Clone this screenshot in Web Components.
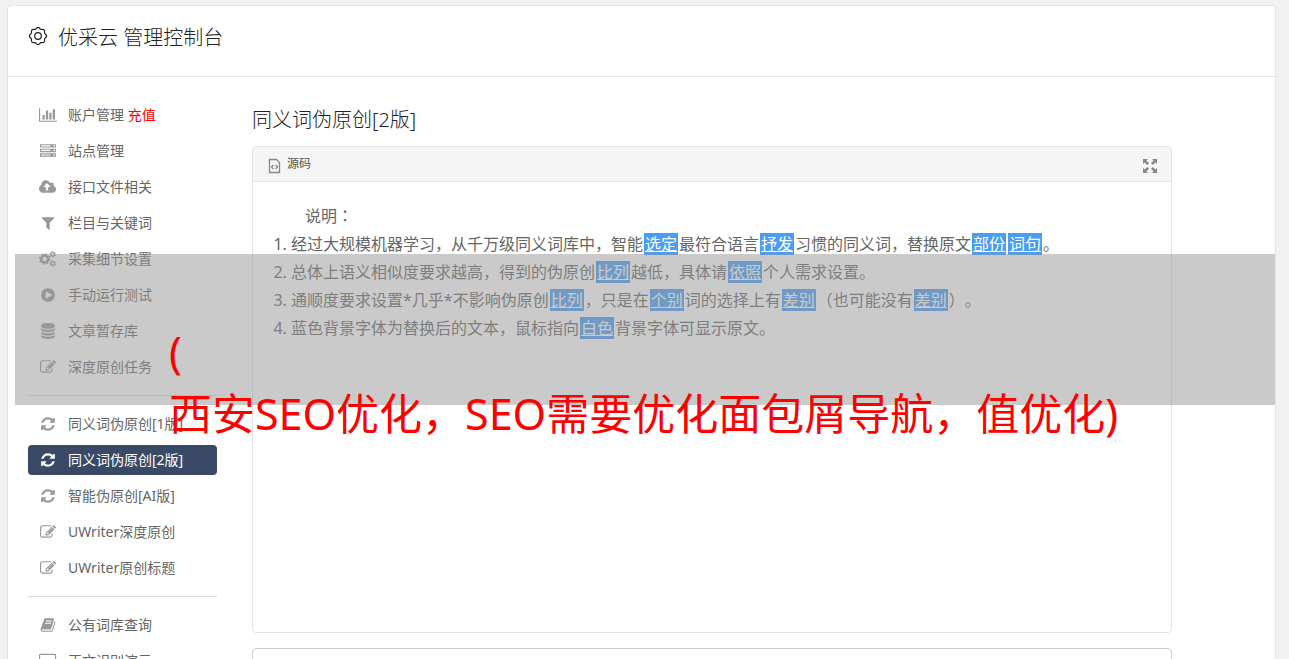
<!DOCTYPE html>
<html lang="zh-CN">
<head>
<meta charset="utf-8">
<title>优采云 管理控制台</title>
<style>
html{background:#f2f2f2}
body{margin:0;color:#666;font:14px/20px "Noto Sans","Noto Sans CJK SC",sans-serif;text-spacing-trim:space-all}
</style>
</head>
<body>
<console-page>
  <console-header slot="header">优采云 管理控制台</console-header>
  <side-nav slot="nav">
    <nav-item icon="chart">账户管理 <span style="color:#f00">充值</span></nav-item>
    <nav-item icon="server">站点管理</nav-item>
    <nav-item icon="cloud">接口文件相关</nav-item>
    <nav-item icon="filter">栏目与关键词</nav-item>
    <nav-item icon="cogs">采集细节设置</nav-item>
    <nav-item icon="play">手动运行测试</nav-item>
    <nav-item icon="database">文章暂存库</nav-item>
    <nav-item icon="edit">深度原创任务</nav-item>
    <nav-line></nav-line>
    <nav-item icon="refresh">同义词伪原创[1版]</nav-item>
    <nav-item icon="refresh" active>同义词伪原创[2版]</nav-item>
    <nav-item icon="refresh">智能伪原创[AI版]</nav-item>
    <nav-item icon="edit">UWriter深度原创</nav-item>
    <nav-item icon="edit">UWriter原创标题</nav-item>
    <nav-line></nav-line>
    <nav-item icon="book">公有词库查询</nav-item>
    <nav-item icon="desktop">正文识别演示</nav-item>
  </side-nav>
  <rewrite-editor></rewrite-editor>
  <page-caption slot="caption"></page-caption>
</console-page>

<script>
const ICONS = {
  chart: ['2048', '<path d="M640 896v512h-256v-512h256zm384-512v1024h-256v-1024h256zm1024 1152v128h-2048v-1536h128v1408h1920zm-640-896v768h-256v-768h256zm384-384v1152h-256v-1152h256z"/>'],
  server: ['1792', '<path d="M128 1408h1024v-128h-1024v128zm0-512h1024v-128h-1024v128zm1568 448q0-40-28-68t-68-28-68 28-28 68 28 68 68 28 68-28 28-68zm-1568-960h1024v-128h-1024v128zm1568 448q0-40-28-68t-68-28-68 28-28 68 28 68 68 28 68-28 28-68zm0-512q0-40-28-68t-68-28-68 28-28 68 28 68 68 28 68-28 28-68zm96 832v384h-1792v-384h1792zm0-512v384h-1792v-384h1792zm0-512v384h-1792v-384h1792z"/>'],
  cloud: ['1920', '<path d="M1280 864q0-14-9-23l-352-352q-9-9-23-9t-23 9l-351 351q-10 12-10 24 0 14 9 23t23 9h224v352q0 13 9.5 22.5t22.5 9.5h192q13 0 22.5-9.5t9.5-22.5v-352h224q13 0 22.5-9.5t9.5-22.5zm640 288q0 159-112.5 271.5t-271.5 112.5h-1088q-185 0-316.5-131.5t-131.5-316.5q0-130 70-240t188-165q-2-30-2-43 0-212 150-362t362-150q156 0 285.5 87t188.5 231q71-62 166-62 106 0 181 75t75 181q0 76-41 138 130 31 213.5 135.5t83.5 238.5z"/>'],
  filter: ['1792', '<path d="M1595 295q17 41-14 70l-493 493v742q0 42-39 59-13 5-25 5-27 0-45-19l-256-256q-19-19-19-45v-486l-493-493q-31-29-14-70 17-39 59-39h1280q42 0 59 39z"/>'],
  cogs: ['1920', '<g fill="none" stroke="currentColor"><circle cx="640" cy="896" r="384" stroke-width="260"/><circle cx="640" cy="896" r="560" stroke-width="170" stroke-dasharray="220 220"/><circle cx="1536" cy="384" r="200" stroke-width="140"/><circle cx="1536" cy="384" r="310" stroke-width="120" stroke-dasharray="162 162"/><circle cx="1536" cy="1408" r="200" stroke-width="140"/><circle cx="1536" cy="1408" r="310" stroke-width="120" stroke-dasharray="162 162"/></g>'],
  play: ['1792', '<path d="M896 128q209 0 385.5 103t279.5 279.5 103 385.5-103 385.5-279.5 279.5-385.5 103-385.5-103-279.5-279.5-103-385.5 103-385.5 279.5-279.5 385.5-103zm384 823q32-18 32-55t-32-55l-544-320q-31-19-64-1-32 19-32 56v640q0 37 32 56 16 8 32 8 17 0 32-9z"/>'],
  database: ['1792', '<path d="M896 768q237 0 443-43t325-127v170q0 69-103 128t-280 93.5-385 34.5-385-34.5-280-93.5-103-128v-170q119 84 325 127t443 43zm0 768q237 0 443-43t325-127v170q0 69-103 128t-280 93.5-385 34.5-385-34.5-280-93.5-103-128v-170q119 84 325 127t443 43zm0-384q237 0 443-43t325-127v170q0 69-103 128t-280 93.5-385 34.5-385-34.5-280-93.5-103-128v-170q119 84 325 127t443 43zm0-1152q208 0 385 34.5t280 93.5 103 128v128q0 69-103 128t-280 93.5-385 34.5-385-34.5-280-93.5-103-128v-128q0-69 103-128t280-93.5 385-34.5z"/>'],
  edit: ['1792', '<path d="M888 1184l116-116-152-152-116 116v56h96v96h56zm440-720q-16-16-33 1l-350 350q-17 17-1 33t33-1l350-350q17-17 1-33zm80 594v190q0 119-84.5 203.5t-203.5 84.5h-832q-119 0-203.5-84.5t-84.5-203.5v-832q0-119 84.5-203.5t203.5-84.5h832q63 0 117 25 15 7 18 23 3 17-9 29l-49 49q-14 14-32 8-23-6-45-6h-832q-66 0-113 47t-47 113v832q0 66 47 113t113 47h832q66 0 113-47t47-113v-126q0-13 9-22l64-64q15-15 35-7t20 29zm-96-738l288 288-672 672h-288v-288zm444 132l-92 92-288-288 92-92q28-28 68-28t68 28l152 152q28 28 28 68t-28 68z"/>'],
  refresh: ['1792', '<path d="M1639 1056q0 5-1 7-64 268-268 434.5t-478 166.5q-146 0-282.5-55t-243.5-157l-129 129q-19 19-45 19t-45-19-19-45v-448q0-26 19-45t45-19h448q26 0 45 19t19 45-19 45l-137 137q71 66 161 102t187 36q134 0 250-65t186-179q11-17 53-117 8-23 30-23h192q13 0 22.5 9.5t9.5 22.5zm25-800v448q0 26-19 45t-45 19h-448q-26 0-45-19t-19-45 19-45l138-138q-148-137-349-137-134 0-250 65t-186 179q-11 17-53 117-8 23-30 23h-199q-13 0-22.5-9.5t-9.5-22.5v-7q65-268 270-434.5t480-166.5q146 0 284 55.5t245 156.5l130-129q19-19 45-19t45 19 19 45z"/>'],
  book: ['1792', '<path d="M1703 478q40 57 18 129l-275 906q-19 64-76.5 107.5t-122.5 43.5h-923q-77 0-148.5-53.5t-99.5-131.5q-24-67-2-127 0-4 3-27t4-37q1-8-3-21.5t-3-19.5q2-11 8-21t16.5-23.5 16.5-23.5q23-38 45-91.5t30-91.5q3-10 .5-30t-.5-28q3-11 17-28t17-23q21-36 42-92t25-90q1-9-2.5-32t.5-28q4-13 22-30.5t22-22.5q19-26 42.5-84.5t27.5-96.5q1-8-3-25.5t-2-26.5q2-8 9-18t18-23 17-21q8-12 16.5-30.5t15-35 16-36 19.5-32 26.5-23.5 36-11.5 47.5 5.5l-1 3q38-9 51-9h761q74 0 114 56t18 130l-274 906q-36 119-71.5 153.5t-128.5 34.5h-869q-27 0-38 15-11 16-1 43 24 70 144 70h923q29 0 56-15.5t35-41.5l300-987q7-22 5-57 38 15 59 43zm-1064 2q-4 13 2 22.5t20 9.5h608q13 0 25.5-9.5t16.5-22.5l21-64q4-13-2-22.5t-20-9.5h-608q-13 0-25.5 9.5t-16.5 22.5zm-83 256q-4 13 2 22.5t20 9.5h608q13 0 25.5-9.5t16.5-22.5l21-64q4-13-2-22.5t-20-9.5h-608q-13 0-25.5 9.5t-16.5 22.5z"/>'],
  desktop: ['1920', '<path fill="none" stroke="currentColor" stroke-width="130" d="M65 220q0-60 60-60h1670q60 0 60 60v1060q0 60-60 60h-1670q-60 0-60-60z"/><path d="M700 1340h520v260h-520z"/>']
};

function define(name, html, setup) {
  customElements.define(name, class extends HTMLElement {
    constructor() {
      super();
      this.attachShadow({mode: 'open'}).innerHTML = html;
    }
    connectedCallback() { if (setup) setup(this, this.shadowRoot); }
  });
}

define('console-page', `
<style>
:host{display:block;padding:5px 13px 20px 7px}
.card{position:relative;background:#fff;border:1px solid #e5e5e5;border-radius:4px}
.cols{display:flex;gap:35px;padding:23px 103px 20px 20px}
main{flex:1;min-width:0}
</style>
<div class="card"><slot name="header"></slot><div class="cols"><slot name="nav"></slot><main><slot></slot></main></div><slot name="caption"></slot></div>`);

define('console-header', `
<style>
:host{display:block;border-bottom:1px solid #e5e5e5;padding:16px 20px 22px;color:#222}
h1{display:flex;align-items:flex-start;gap:10px;margin:0;font-size:20px;line-height:32px;font-weight:300}
svg{width:20px;height:20px;margin-top:4px;flex:none}
</style>
<h1><svg viewBox="0 0 20 20" fill="none" stroke="currentColor" stroke-width="1.2"><path id="rim"/><circle cx="10" cy="10" r="3.3"/></svg><slot></slot></h1>`,
(el, root) => {
  const pts = [];
  for (let i = 0; i < 160; i++) {
    const a = i / 160 * Math.PI * 2;
    const r = 7.9 + 0.65 * Math.cos(8 * a);
    pts.push((10 + r * Math.sin(a)).toFixed(2) + ' ' + (10 - r * Math.cos(a)).toFixed(2));
  }
  root.getElementById('rim').setAttribute('d', 'M' + pts.join('L') + 'Z');
});

define('side-nav', `
<style>
:host{display:block;flex:none;width:189px}
nav{display:flex;flex-direction:column;gap:6px}
</style>
<nav><slot></slot></nav>`);

define('nav-line', `
<style>
:host{display:block;padding:7px 0}
hr{margin:0;border:0;border-top:1px solid #ddd}
</style><hr>`);

define('nav-item', `
<style>
:host{display:block}
a{display:flex;align-items:center;gap:10px;height:30px;padding:0 10px;border-radius:4px;color:#666;text-decoration:none;white-space:nowrap}
.icon{display:flex;justify-content:center;width:20px;color:#999}
svg{height:16px;fill:currentColor}
:host([active]) a{background:#3a4a66;color:#fff}
:host([active]) .icon{color:#fff}
</style>
<a href="#"><span class="icon"></span><span><slot></slot></span></a>`,
(el, root) => {
  const [w, body] = ICONS[el.getAttribute('icon')];
  root.querySelector('.icon').innerHTML = `<svg viewBox="0 0 ${w} 1792" aria-hidden="true">${body}</svg>`;
});

define('swap-word', `<style>:host{display:inline;margin:0 1px;padding:0 1px;background:#4a9df5;color:#fff;text-decoration:underline}</style><slot></slot>`);

define('rewrite-editor', `
<style>
:host{display:block}
h2{margin:4px 0 11px;font-size:20px;line-height:31px;font-weight:300;color:#222}
.panel{border:1px solid #e5e5e5;border-radius:4px}
.bar{display:flex;justify-content:space-between;align-items:center;height:34px;padding:0 13px 0 15px;background:#f5f5f5;border-bottom:1px solid #e5e5e5;border-radius:4px 4px 0 0}
button{display:flex;align-items:center;gap:6px;margin:0;padding:0;border:0;background:none;color:#555;font:inherit;font-size:12px;line-height:22px}
svg{display:block;margin-top:4px;color:#888}
.text{min-height:430px;padding:20px 20px 0;font-size:16px;line-height:28px}
p{margin:0;text-indent:32px}
ol{margin:0;padding:0 0 0 18px}
[lang]{font-family:"Noto Sans","Noto Sans CJK TC",sans-serif}
textarea{display:block;box-sizing:border-box;width:100%;height:120px;margin:15px 0 0;border:1px solid #ccc;border-radius:4px;resize:none;background:#fff}
</style>
<h2>同义词伪原创[2版]</h2>
<section class="panel">
  <div class="bar">
    <button type="button"><svg width="13" height="16" viewBox="0 0 13 16" fill="none" stroke="currentColor" stroke-width="1.3"><path d="M1.5 1.5h7l3 3v10h-10z"/><path d="M5.5 7l-2 2 2 2M7.500 7l2 2-2 2"/></svg>源码</button>
    <button type="button" aria-label="全屏"><svg width="16" height="16" viewBox="0 0 16 16" fill="currentColor"><path d="M1 1h5L4.400 2.600 7 5.200 5.200 7 2.600 4.400 1 6z"/><path d="M15 1v5l-1.600-1.600L10.800 7 9 5.200l2.600-2.600L10 1zM1 15v-5l1.600 1.600L5.200 9 7 10.800l-2.600 2.600L6 15zM15 15h-5l1.600-1.600L9 10.800 10.800 9l2.600 2.600L15 10z"/></svg></button>
  </div>
  <div class="text">
    <p>说明<span lang="zh-TW">：</span></p>
    <ol>
      <li>经过大规模机器学习，从千万级同义词库中，智能<swap-word>选定</swap-word>最符合语言<swap-word>抒发</swap-word>习惯的同义词，替换原文<swap-word>部份</swap-word><swap-word>词句</swap-word>。</li>
      <li>总体上语义相似度要求越高，得到的伪原创<swap-word>比列</swap-word>越低，具体请<swap-word>依照</swap-word>个人需求设置。</li>
      <li>通顺度要求设置*几乎*不影响伪原创<swap-word>比列</swap-word>，只是在<swap-word>个别</swap-word>词的选择上有<swap-word>差别</swap-word>（也可能没有<swap-word>差别</swap-word>）。</li>
      <li>蓝色背景字体为替换后的文本，鼠标指向<swap-word>白色</swap-word>背景字体可显示原文。</li>
    </ol>
  </div>
</section>
<textarea aria-label="原文"></textarea>`);

define('page-caption', `
<style>
:host{position:absolute;top:248px;left:7px;right:0;height:151px;background:rgba(150,150,150,.5);pointer-events:none}
p{margin:0;padding:67px 0 0 154px;color:#f00;font-size:43px;line-height:62px;white-space:nowrap}
</style>
<p>(<br>西安SEO优化，SEO需要优化面包屑导航，值优化)</p>`);
</script>
</body>
</html>
